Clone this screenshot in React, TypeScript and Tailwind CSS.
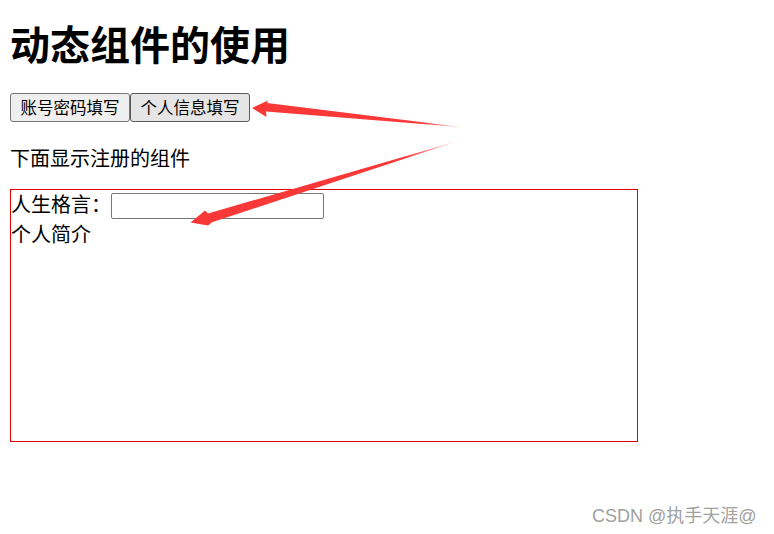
const cjk = "font-['Microsoft_YaHei','Noto_Sans_CJK_SC',sans-serif]";

function Arrows() {
  return (
    <svg className="pointer-events-none absolute inset-0" width="774" height="534" viewBox="0 0 774 534">
      <defs>
        <linearGradient id="fade1" x1="252" y1="0" x2="463" y2="0" gradientUnits="userSpaceOnUse">
          <stop offset="0" stopColor="#fb3838" />
          <stop offset="0.8" stopColor="#fb3838" />
          <stop offset="1" stopColor="#fb3838" stopOpacity="0.2" />
        </linearGradient>
        <linearGradient id="fade2" x1="190" y1="222" x2="458" y2="141" gradientUnits="userSpaceOnUse">
          <stop offset="0" stopColor="#fb3838" />
          <stop offset="0.8" stopColor="#fb3838" />
          <stop offset="1" stopColor="#fb3838" stopOpacity="0.2" />
        </linearGradient>
      </defs>
      <polygon
        points="252,108 268,100.5 267,103 463,127.3 266,111.5 266.5,117"
        fill="url(#fade1)"
      />
      <polygon
        points="190.5,222.5 205,210.5 208,213.5 458,141 212,222.3 208,225.5"
        fill="url(#fade2)"
      />
    </svg>
  );
}

export default function App() {
  return (
    <div className={`relative h-[534px] w-[774px] overflow-hidden bg-white px-[10px] text-black ${cjk}`}>
      <h1 className="pt-[20px] text-[40px] font-bold leading-[47px]">动态组件的使用</h1>

      <div className="mt-[26px] flex">
        <button className="h-[29px] w-[120px] rounded-[3px] border border-[#767676] bg-[#efefef] text-[16.5px] leading-none">
          账号密码填写
        </button>
        <button className="h-[29px] w-[120px] rounded-[3px] border border-[#5a5a5a] bg-[#e5e5e5] text-[16.5px] leading-none">
          个人信息填写
        </button>
      </div>

      <p className="mt-[23px] text-[20px] leading-[26px]">下面显示注册的组件</p>

      <div className="mt-[18px] h-[253px] w-[628px] border border-[#e00000]">
        <div className="flex h-[31px] items-start">
          <span className="text-[20px] leading-[28px]">人生格言：</span>
          <input
            type="text"
            className="mt-[3px] h-[26px] w-[213px] rounded-[2px] border border-[#767676] bg-white px-1 text-[16px] outline-none"
          />
        </div>
        <p className="text-[20px] leading-[26px]">个人简介</p>
      </div>

      <span className="absolute left-[592px] top-[503px] font-['Liberation_Sans','Noto_Sans_CJK_SC',sans-serif] text-[18px] leading-[26px] text-[#a0a0a0]">
        CSDN @执手天涯@
      </span>

      <Arrows />
    </div>
  );
}
